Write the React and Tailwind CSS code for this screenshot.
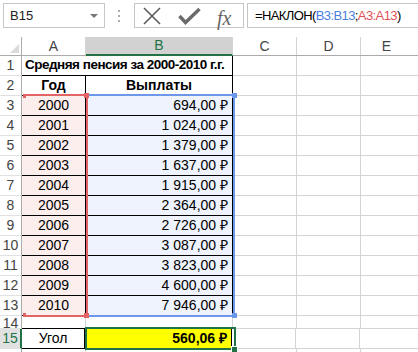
import React from "react";

// Данные таблицы: год и выплата
const rows = [
  ["2000", "694,00 ₽"],
  ["2001", "1 024,00 ₽"],
  ["2002", "1 379,00 ₽"],
  ["2003", "1 637,00 ₽"],
  ["2004", "1 915,00 ₽"],
  ["2005", "2 364,00 ₽"],
  ["2006", "2 726,00 ₽"],
  ["2007", "3 087,00 ₽"],
  ["2008", "3 823,00 ₽"],
  ["2009", "4 600,00 ₽"],
  ["2010", "7 946,00 ₽"],
];

const FormulaBar = () => (
  <div className="h-[37px] relative bg-white">
    {/* name box */}
    <div className="absolute left-[3px] top-[3px] w-[102px] h-[25px] border border-[#c6c6c6] flex items-center pl-[6px] text-[13px] text-[#222]">
      B15
      <svg className="absolute right-[6px] top-[10px]" width="8" height="5" viewBox="0 0 8 5">
        <polygon points="0,0 8,0 4,4" fill="#777" />
      </svg>
    </div>
    {/* dots */}
    <div className="absolute left-[118px] top-[10px] flex flex-col gap-[3px]">
      <div className="w-[2px] h-[2px] bg-[#aaa]" />
      <div className="w-[2px] h-[2px] bg-[#aaa]" />
      <div className="w-[2px] h-[2px] bg-[#aaa]" />
    </div>
    {/* buttons */}
    <div className="absolute left-[134px] top-[3px] w-[110px] h-[25px] border border-[#c6c6c6]">
      <svg className="absolute left-[8px] top-[3px]" width="18" height="18" viewBox="0 0 18 18">
        <path d="M1 1 L17 17 M17 1 L1 17" stroke="#5a5a5a" strokeWidth="1.6" fill="none" />
      </svg>
      <svg className="absolute left-[43px] top-[3px]" width="23" height="18" viewBox="0 0 23 18">
        <path d="M1.5 9 L7.5 15.5 L21.5 2" stroke="#6a6a6a" strokeWidth="3.4" fill="none" />
      </svg>
      <span className="absolute left-[82px] top-[-1px] font-['Liberation_Serif',serif] italic text-[20px] text-[#666]">
        fx
      </span>
    </div>
    {/* formula input */}
    <div className="absolute left-[247px] top-[3px] w-[180px] h-[25px] border border-[#c6c6c6] flex items-center pl-[7px] text-[13px] tracking-[-0.6px] text-black whitespace-nowrap">
      =НАКЛОН(<span className="text-[#4a7fe0]">B3:B13</span>;<span className="text-[#e0525a]">A3:A13</span>)
    </div>
  </div>
);

const RowHead = ({ n, h = "h-[20px]", active }) => (
  <div
    className={`w-[22px] shrink-0 ${h} flex items-center justify-center text-[14px] border-r ${
      active ? "bg-[#e1e1e1] text-[#217346] border-r-2 border-r-[#217346]" : "bg-white text-[#444] border-r-[#ababab]"
    } border-b border-b-[#e1e1e1]`}
  >
    {n}
  </div>
);

const Rest = () => (
  <>
    <div className="w-[64px] shrink-0 border-r border-b border-[#d4d4d4]" />
    <div className="w-[64px] shrink-0 border-r border-b border-[#d4d4d4]" />
    <div className="flex-1 border-b border-[#d4d4d4]" />
  </>
);

export default function App() {
  return (
    <div className="w-[418px] h-[352px] overflow-hidden bg-white relative font-['Liberation_Sans',sans-serif] text-black">
      <FormulaBar />

      {/* column headers */}
      <div className="flex h-[19px] border-b border-[#ababab] text-[14px] text-[#444]">
        <div className="w-[22px] shrink-0 border-r border-[#ababab] relative">
          <svg className="absolute right-[2px] bottom-[2px]" width="9" height="9" viewBox="0 0 9 9">
            <polygon points="9,0 9,9 0,9" fill="#dadada" />
          </svg>
        </div>
        <div className="w-[64px] shrink-0 border-r border-[#d4d4d4] flex items-center justify-center">A</div>
        <div className="w-[147px] shrink-0 bg-[#d2d2d2] border-r border-[#d4d4d4] border-b-2 border-b-[#217346] -mb-px flex items-center justify-center text-[#217346]">
          B
        </div>
        <div className="w-[64px] shrink-0 border-r border-[#d4d4d4] flex items-center justify-center">C</div>
        <div className="w-[64px] shrink-0 border-r border-[#d4d4d4] flex items-center justify-center">D</div>
        <div className="flex-1 flex items-center justify-center pr-[6px]">E</div>
      </div>

      {/* row 1 */}
      <div className="flex h-[20px] text-[14px]">
        <RowHead n="1" />
        <div className="w-[211px] shrink-0 border-r border-b border-black flex items-center pl-[3px] font-bold whitespace-nowrap text-[13.5px] tracking-[-0.5px] overflow-hidden">
          Средняя пенсия за 2000-2010 г.г.
        </div>
        <Rest />
      </div>

      {/* row 2 */}
      <div className="flex h-[20px] text-[14px]">
        <RowHead n="2" />
        <div className="w-[64px] shrink-0 border-r border-b border-black flex items-center justify-center font-bold">Год</div>
        <div className="w-[147px] shrink-0 border-r border-b border-black flex items-center justify-center font-bold">Выплаты</div>
        <Rest />
      </div>

      {/* rows 3-13 */}
      {rows.map(([year, pay], i) => (
        <div key={year} className="flex h-[20px] text-[14px]">
          <RowHead n={i + 3} />
          <div className="w-[64px] shrink-0 bg-[#fdeeee] border-r border-b border-black flex items-center justify-center">{year}</div>
          <div className="w-[147px] shrink-0 bg-[#eef3fd] border-r border-b border-black flex items-center justify-end pr-[4px] whitespace-nowrap">
            {pay}
          </div>
          <Rest />
        </div>
      ))}

      {/* row 14, почти скрыта */}
      <div className="flex h-[13px] text-[14px] overflow-hidden">
        <div className="w-[22px] shrink-0 h-[13px] border-r border-[#ababab] border-b border-b-[#e1e1e1] text-[#444] flex items-start justify-center leading-[16px] overflow-hidden">
          <span className="-mt-[1px]">14</span>
        </div>
        <div className="w-[64px] shrink-0 border-r border-b border-[#d4d4d4] border-b-black" />
        <div className="w-[147px] shrink-0 border-r border-b border-[#d4d4d4]" />
        <Rest />
      </div>

      {/* row 15 */}
      <div className="flex h-[20px] text-[14px]">
        <RowHead n="15" active />
        <div className="w-[63px] shrink-0 border-r border-b border-black flex items-center justify-center">Угол</div>
        <div className="w-[147px] shrink-0 bg-[#ffff00] border-r border-b border-black flex items-center justify-end pr-[4px] font-bold whitespace-nowrap">
          560,06 ₽
        </div>
        <Rest />
      </div>

      {/* row 16 */}
      <div className="flex h-[20px]">
        <div className="w-[22px] shrink-0 border-r border-[#ababab]" />
        <div className="w-[64px] shrink-0 border-r border-[#d4d4d4]" />
        <div className="w-[147px] shrink-0 border-r border-[#d4d4d4]" />
        <div className="w-[64px] shrink-0 border-r border-[#d4d4d4]" />
        <div className="w-[64px] shrink-0 border-r border-[#d4d4d4]" />
      </div>

      {/* reference frames */}
      <div className="absolute left-[86px] top-[94px] w-[149px] h-[223px] border-t-2 border-r-2 border-b-2 border-[#6d97e8]" />
      <div className="absolute left-[232px] top-[93px] w-[5px] h-[5px] bg-[#6d97e8]" />
      <div className="absolute left-[232px] top-[313px] w-[5px] h-[5px] bg-[#6d97e8]" />
      <div className="absolute left-[23px] top-[94px] w-[65px] h-[223px] border-t-2 border-r-2 border-b-2 border-[#e36464]" />
      <div className="absolute left-[23px] top-[94px] w-[3px] h-[4px] bg-[#e36464]" />
      <div className="absolute left-[23px] top-[313px] w-[3px] h-[4px] bg-[#e36464]" />
      <div className="absolute left-[84px] top-[93px] w-[5px] h-[5px] bg-[#e36464]" />
      <div className="absolute left-[84px] top-[313px] w-[5px] h-[5px] bg-[#e36464]" />

      {/* selected cell B15 */}
      <div className="absolute left-[85px] top-[327px] w-[151px] h-[23px] border-2 border-[#217346]" />
      <div className="absolute left-[231px] top-[346px] w-[7px] h-[7px] bg-[#217346] border border-white" />
    </div>
  );
}
